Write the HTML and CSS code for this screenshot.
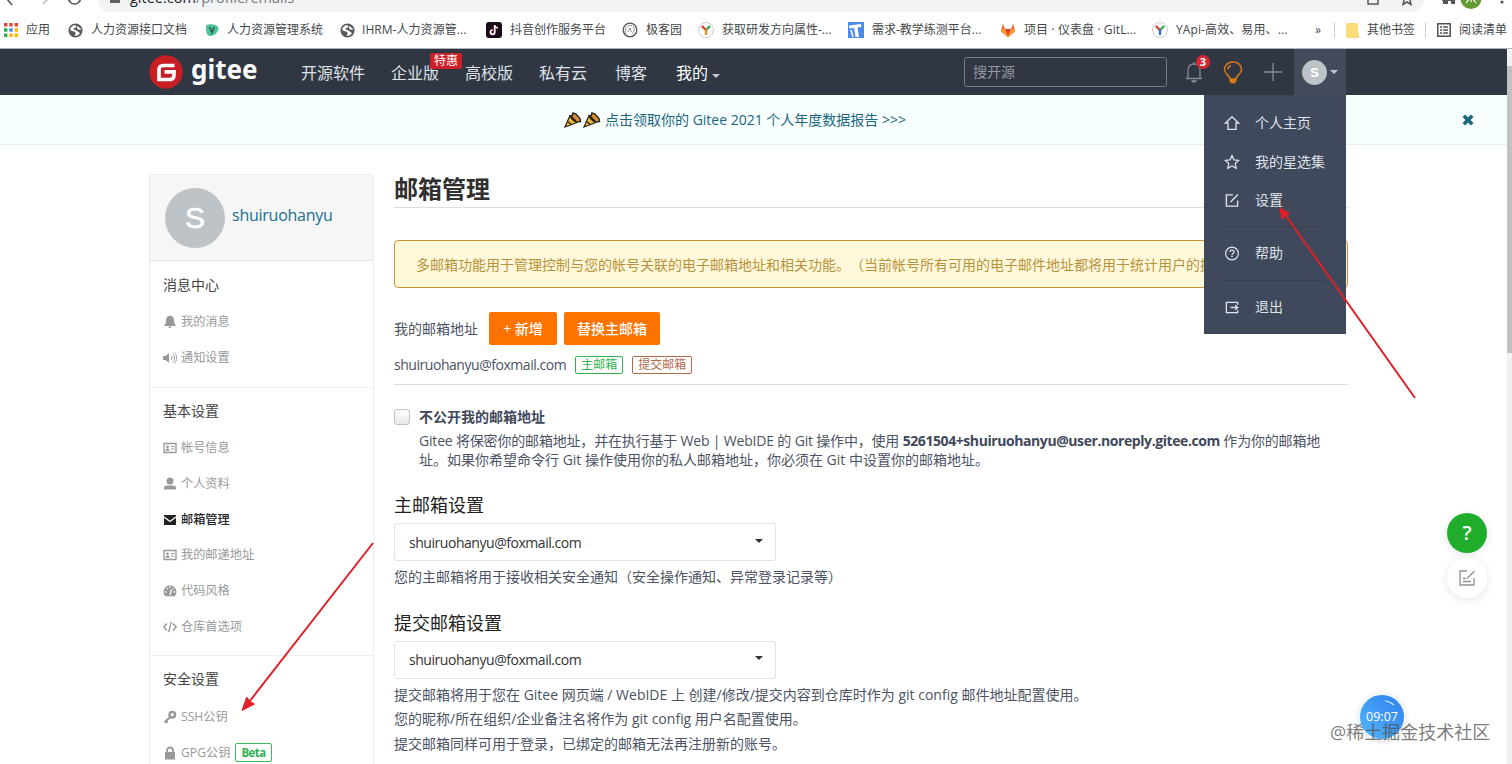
FILE: index.html
```html
<!DOCTYPE html>
<html lang="zh-CN">
<head>
    <meta charset="UTF-8" />
    <meta name="viewport" content="width=device-width, initial-scale=1.0" />
    <title>邮箱管理 - Gitee.com</title>
    <link rel="stylesheet" href="styles.css">
</head>
<body>
    <svg class="symbols" xmlns="http://www.w3.org/2000/svg">
        <symbol id="i-globe" viewBox="0 0 16 16"><circle cx="8" cy="8" r="7.500" fill="#55585c"/><path d="M8.500 2.500C5 2 2.500 4.500 2.300 7.500L5.500 9l2 .3.500 2-1 2.200c2.500.3 4.500-.8 5.800-2.700L10.500 9 8 7.500l-2-.8L8.500 5z" fill="#fff"/><path d="m9.500 3 3.500 2.500.8 2-3-.5L9 5z" fill="#fff"/><path d="m6 6.700 3.500-2M5 9.500l2.500 2" stroke="#55585c" stroke-width="1.200"/></symbol>
        <symbol id="i-card" viewBox="0 0 14 12"><path d="M1 1.500h12v9H1z" fill="none" stroke="#999" stroke-width="1.300"/><circle cx="4.500" cy="4.800" r="1.400" fill="#999"/><path d="M2.300 8.800c0-3 4.400-3 4.400 0zM8 4h3.500v1H8zM8 6.500h3.500v1H8z" fill="#999"/></symbol>
        <symbol id="i-edit" viewBox="0 0 16 16"><path d="M9 2H2v12h12V8M6.500 9.500 14.300 1.700" fill="none" stroke="currentColor" stroke-width="1.500"/></symbol>
        <symbol id="i-popper" viewBox="0 0 18 18"><path d="M1 16 6 4.500c3 .5 6 3.500 7 7z" fill="#f5b82e" stroke="#222" stroke-width="1.200"/><path d="M6 4c-1.500 2.500 5 9 7.500 7.500C15 10 8 3 6 4z" fill="#222"/><path d="m3.700 10.500 4 3.200" stroke="#222" stroke-width="1.200"/><path d="m8 5 1-3 3 1 4 4.500.5 3-3 .5" fill="#d98a32" stroke="#222" stroke-width="1.400"/></symbol>
    </svg>

    <div class="address-row">
        <svg class="nav-buttons" width="90" height="12" viewBox="0 0 90 12"><path d="M13-8 7-1l5 6" fill="none" stroke="#555" stroke-width="1.600"/><path d="m42-8 6 7-5 5" fill="none" stroke="#bbb" stroke-width="1.600"/><circle cx="74.500" cy="-2" r="6" fill="none" stroke="#555" stroke-width="1.700"/></svg>
        <div class="address-bar">
            <svg width="10" height="9" viewBox="0 0 10 9"><path d="M0-4h10v7H0z" fill="#5f6368"/></svg>
            <span class="address-text"><b>gitee.com</b>/profile/emails</span>
            <svg class="address-icons" width="50" height="12" viewBox="0 0 50 12"><path d="M2-5v9h10V0M41-8l1.500 5H48l-4 3 1 4.500-4-2.500-4 2.500L38 0l-4-3h5z" fill="none" stroke="#555" stroke-width="1.500"/></svg>
        </div>
        <svg width="88" height="12" viewBox="0 0 88 12"><path d="M18-5h12v5h1v4h-4V1h-3v3h-5V1h-1z" fill="#555"/><circle cx="47" cy="-1.500" r="10.500" fill="#649b32"/><path d="M47-4v6M42 3l3-4M52 3l-3-4" stroke="#fff" stroke-width="1.200"/><circle cx="78" cy="2" r="1.600" fill="#555"/></svg>
    </div>

    <div class="bookmarks">
        <svg width="14" height="14" viewBox="0 0 14 14"><path d="M0 0h3.400v3.400H0zM5.300 0h3.400v3.400H5.300zM10.600 0H14v3.400h-3.400z" fill="#e94335"/><path d="M0 5.300h3.400v3.400H0zM0 10.600h3.400V14H0z" fill="#34a853"/><path d="M5.300 5.300h3.400v3.400H5.300z" fill="#4285f4"/><path d="M10.600 5.300H14v3.400h-3.400zM5.300 10.600h3.400V14H5.300zM10.600 10.600H14V14h-3.400z" fill="#fbb605"/></svg>
        <span class="bm-text bm-apps">应用</span>
        <svg width="15" height="15"><use href="#i-globe"/></svg>
        <span class="bm-text bm-doc">人力资源接口文档</span>
        <svg width="14" height="14" viewBox="0 0 14 14"><path d="M1 4c0-3 3-3 7-2.500s5.500 2 5.500 4.500S9 13.500 5 13 1 8 1 4z" fill="#4fc39a"/><path d="M4.500 4 7 9.500 9 4" fill="none" stroke="#245b4b" stroke-width="1.500"/></svg>
        <span class="bm-text bm-hr">人力资源管理系统</span>
        <svg width="15" height="15"><use href="#i-globe"/></svg>
        <span class="bm-text bm-ihrm">IHRM-人力资源管...</span>
        <svg width="16" height="16" viewBox="0 0 16 16"><rect width="16" height="16" rx="3" fill="#170b1a"/><path d="M8.400 3v7.200a2 2 0 1 1-2-2" fill="none" stroke="#ef3a64" stroke-width="1.800"/><path d="M8.800 3v7.200a2.200 2.200 0 1 1-2.200-2.200M8.800 3c.3 1.800 1.500 2.800 3.200 3" fill="none" stroke="#fff" stroke-width="1.500"/></svg>
        <span class="bm-text bm-dy">抖音创作服务平台</span>
        <svg width="16" height="16" viewBox="0 0 16 16"><circle cx="8" cy="8" r="6.800" fill="#fff" stroke="#555" stroke-width="1.300"/><path d="M3.500 12C2 7 5 2.500 10 3.500M6 10l2-4 1.500 4M11 4c2 3 1.500 6-1 8" fill="none" stroke="#777" stroke-width=".8"/></svg>
        <span class="bm-text bm-geek">极客园</span>
        <svg width="16" height="16" viewBox="0 0 16 16"><circle cx="8" cy="8" r="7.500" fill="#fff" stroke="#ccc"/><path d="m3.800 4 4.200 4" stroke="#e4372e" stroke-width="2.400"/><path d="m12.200 4-4.200 4" stroke="#2fa84f" stroke-width="2.400"/><path d="M8 7.500V13" stroke="#e58a1f" stroke-width="2.400"/></svg>
        <span class="bm-text bm-yapi">获取研发方向属性-...</span>
        <svg width="16" height="16" viewBox="0 0 16 16"><path d="M0 0h16v16H0z" fill="#4a8bea"/><path d="M1 3.500 13 2l.5 3-4 .5L11 15H7.500L6 6l-4.500.5z" fill="#fff"/><path d="m3 8 2 7" stroke="#fff" stroke-width="1.500"/></svg>
        <span class="bm-text bm-need">需求-教学练测平台...</span>
        <svg width="16" height="16" viewBox="0 0 16 16"><path d="M8 15 .8 9.500 3 1.500 5 7h6l2-5.500 2.200 8z" fill="#f6692f"/><path d="M8 15 5 7h6z" fill="#dc4329"/><path d="m8 15 7.200-5.500L14.300 7H11zM8 15 .8 9.500 1.700 7H5z" fill="#fc9a39"/></svg>
        <span class="bm-text bm-gitlab">项目 · 仪表盘 · GitL...</span>
        <svg width="16" height="16" viewBox="0 0 16 16"><circle cx="8" cy="8" r="7.500" fill="#fff" stroke="#ccc"/><path d="m3.800 4 4.200 4" stroke="#e4372e" stroke-width="2.400"/><path d="m12.200 4-4.200 4" stroke="#2fa84f" stroke-width="2.400"/><path d="M8 7.500V13" stroke="#3467d8" stroke-width="2.400"/></svg>
        <span class="bm-text bm-yapi2">YApi-高效、易用、...</span>
        <span class="bm-text bm-more">»</span>
        <i class="bm-line"></i>
        <svg width="13" height="15" viewBox="0 0 13 15"><path d="M1.500 0H11l1 1v8.500h1V15H1.500L0 14V1z" fill="#f9dc7b"/></svg>
        <span class="bm-text bm-other">其他书签</span>
        <i class="bm-line"></i>
        <svg class="bm-list" width="14" height="14" viewBox="0 0 14 14"><path d="M.8.800h12.400v12.400H.8zM3 4h2M6.200 4H11M3 7h2M6.200 7H11M3 10h2M6.200 10H11" fill="none" stroke="#4d5156" stroke-width="1.500"/></svg>
        <span class="bm-text bm-read">阅读清单</span>
    </div>

    <div class="viewport">
        <div class="page">
            <header class="header">
                <div class="logo">
                    <svg width="34" height="34" viewBox="0 0 34 34"><circle cx="17" cy="17" r="16.700" fill="#c71d23"/><path d="M25.500 10.500H14a4 4 0 0 0-4 4v10h11a4 4 0 0 0 4-4v-3.700h-9.500" fill="none" stroke="#fff" stroke-width="3.700"/></svg>
                    <span class="logo-text">gitee</span>
                </div>
                <nav class="nav">
                    <a>开源软件</a>
                    <a class="nav-ent">企业版<em class="nav-badge">特惠</em></a>
                    <a>高校版</a>
                    <a>私有云</a>
                    <a class="nav-blog">博客</a>
                    <a class="nav-mine">我的<i class="caret"></i></a>
                </nav>
                <div class="search">搜开源</div>
                <div class="bell">
                    <svg width="18" height="22" viewBox="0 0 18 22"><path d="M1 17.500h16M3 17V9.500C3 5.500 5 3 9 3s6 2.500 6 6.500V17M9 3V1M7 20c1 1.500 3 1.500 4 0z" fill="none" stroke="#868c98" stroke-width="1.300"/></svg>
                    <span class="bell-count">3</span>
                </div>
                <svg class="bulb" width="20" height="23" viewBox="0 0 20 23"><path d="M7 18c0-4-5.500-4.500-5.500-9.500C1.500 4 5 1 10 1s8.500 3 8.500 7.500c0 5-5.500 5.500-5.500 9.500zM5 8.500c0-2 1-3.500 3-4" fill="none" stroke="#d87918" stroke-width="1.500"/><path d="M6.500 18h7v2.500l-2 2h-3l-2-2z" fill="#d87918"/></svg>
                <svg class="plus" width="18" height="18" viewBox="0 0 18 18"><path d="M9 0v18M0 9h18" stroke="#868c98" stroke-width="1.300"/></svg>
                <div class="user">
                    <span class="user-avatar">S</span>
                    <i class="caret"></i>
                    <ul class="user-menu">
                        <li><svg width="16" height="16" viewBox="0 0 16 16"><path d="M8 1.700 1.500 8H4v6.300h8V8h2.500z" fill="none" stroke="currentColor" stroke-width="1.300"/></svg>个人主页</li>
                        <li><svg width="16" height="16" viewBox="0 0 16 16"><path d="m8 1.500 2 4.400 4.700.5-3.500 3.200 1 4.700L8 12l-4.200 2.300 1-4.700L1.300 6.400 6 5.900z" fill="none" stroke="currentColor" stroke-width="1.300"/></svg>我的星选集</li>
                        <li><svg width="15" height="15"><use href="#i-edit"/></svg>设置</li>
                        <li class="menu-line"><svg width="15" height="15" viewBox="0 0 16 16"><circle cx="8" cy="8" r="6.800" fill="none" stroke="currentColor" stroke-width="1.300"/><path d="M5.800 6.500c0-3 4.400-2.600 4.400 0 0 1.500-2.200 1.500-2.200 3M8 10.500V12" fill="none" stroke="currentColor" stroke-width="1.400"/></svg>帮助</li>
                        <li class="menu-line"><svg width="15" height="15" viewBox="0 0 16 16"><path d="M14 5V2.500H2v11h12V11M6.500 8h7.500M11.500 5.500 14 8l-2.500 2.500" fill="none" stroke="currentColor" stroke-width="1.400"/></svg>退出</li>
                    </ul>
                </div>
            </header>

            <div class="banner">
                <svg width="18" height="18"><use href="#i-popper"/></svg>
                <svg width="18" height="18"><use href="#i-popper"/></svg>
                <a class="banner-link">点击领取你的 Gitee 2021 个人年度数据报告 &gt;&gt;&gt;</a>
                <svg class="banner-close" width="12" height="12" viewBox="0 0 12 12"><path d="m1.800 1.800 8.400 8.400m0-8.400-8.400 8.400" stroke="#1c6681" stroke-width="3.700"/></svg>
            </div>

            <div class="content">
                <aside class="sidebar">
                    <div class="profile">
                        <span class="profile-avatar">S</span>
                        <a class="profile-name">shuiruohanyu</a>
                    </div>
                    <section class="side-group">
                        <h4>消息中心</h4>
                        <ul>
                            <li><svg width="14" height="14" viewBox="0 0 14 14"><path d="M7 .5c-3 .5-4 2.500-4 5S2 9 1 11h12c-1-2-2-3-2-5.500s-1-4.500-4-5zM5.500 11.500h3C8.500 13.500 5.500 13.500 5.500 11.500z" fill="#999"/></svg>我的消息</li>
                            <li><svg width="14" height="14" viewBox="0 0 14 14"><path d="M0 5h2.500L6 2v10L2.500 9H0z" fill="#999"/><path d="M8 5c1.300 1 1.300 3 0 4M9.500 3c2.700 2 2.700 6 0 8M11 1.300c3.600 3 3.600 8.400 0 11.400" fill="none" stroke="#999"/></svg>通知设置</li>
                        </ul>
                    </section>
                    <section class="side-group">
                        <h4>基本设置</h4>
                        <ul>
                            <li><svg width="14" height="12"><use href="#i-card"/></svg>帐号信息</li>
                            <li><svg width="14" height="14" viewBox="0 0 14 14"><circle cx="7" cy="4" r="3.500" fill="#999"/><path d="M1 12.500V11c0-2.500 3-2.500 6-2.500s6 0 6 2.500v1.500z" fill="#999"/></svg>个人资料</li>
                            <li class="active"><svg width="14" height="12" viewBox="0 0 14 12"><path d="M1 1h12v10H1z" fill="#222"/><path d="m1 3 6 4.500L13 3" fill="none" stroke="#fff" stroke-width="1.300"/></svg>邮箱管理</li>
                            <li><svg width="14" height="12"><use href="#i-card"/></svg>我的邮递地址</li>
                            <li><svg width="14" height="14" viewBox="0 0 14 14"><path d="M2.300 12.300a6.500 6.500 0 1 1 9.400 0z" fill="#999"/><path d="M7 11 8.500 5.500M2 8h1.500M10.500 8H12M4 4l1 1M7 2v1.500M10.700 4 10 5" stroke="#fff" stroke-width="1.300"/></svg>代码风格</li>
                            <li><svg width="14" height="12" viewBox="0 0 14 12"><path d="M4 2.500.8 6 4 9.500M10 2.500 13.200 6 10 9.500M8.300.8 5.700 11.200" fill="none" stroke="#999" stroke-width="1.400"/></svg>仓库首选项</li>
                        </ul>
                    </section>
                    <section class="side-group">
                        <h4>安全设置</h4>
                        <ul>
                            <li><svg width="14" height="14" viewBox="0 0 14 14"><circle cx="9.300" cy="4.700" r="2.800" fill="none" stroke="#999" stroke-width="2.400"/><path d="m7 7-5.500 5.500M3 11l1.700 1.700" stroke="#999" stroke-width="2.200"/></svg>SSH公钥</li>
                            <li><svg width="14" height="14" viewBox="0 0 14 14"><path d="M2 6h10v7.500H2z" fill="#999"/><path d="M4 6.500V4.500c0-4 6-4 6 0v2" fill="none" stroke="#999" stroke-width="1.800"/></svg>GPG公钥<b class="beta">Beta</b></li>
                        </ul>
                    </section>
                </aside>

                <main class="main">
                    <h2 class="main-title">邮箱管理</h2>
                    <div class="alert">多邮箱功能用于管理控制与您的帐号关联的电子邮箱地址和相关功能。（当前帐号所有可用的电子邮件地址都将用于统计用户的提交贡献）</div>
                    <div class="mail-actions">
                        <span>我的邮箱地址</span>
                        <button class="btn btn-add">+ 新增</button>
                        <button class="btn btn-replace">替换主邮箱</button>
                    </div>
                    <div class="mail-row">
                        <span class="mail">shuiruohanyu@foxmail.com</span>
                        <span class="tag tag-green">主邮箱</span>
                        <span class="tag tag-brown">提交邮箱</span>
                    </div>
                    <div class="privacy">
                        <span class="checkbox"></span>
                        <div>
                            <div class="privacy-title">不公开我的邮箱地址</div>
                            <p class="privacy-text"><span class="line1">Gitee 将保密你的邮箱地址，并在执行基于 Web | WebIDE 的 Git 操作中，使用 <b>5261504+shuiruohanyu@user.noreply.gitee.com</b> 作为你的邮箱地</span><br>址。如果你希望命令行 Git 操作使用你的私人邮箱地址，你必须在 Git 中设置你的邮箱地址。</p>
                        </div>
                    </div>
                    <h3 class="sub-title">主邮箱设置</h3>
                    <div class="select"><span class="mail">shuiruohanyu@foxmail.com</span><i class="caret"></i></div>
                    <p class="hint">您的主邮箱将用于接收相关安全通知（安全操作通知、异常登录记录等）</p>
                    <h3 class="sub-title sub-title-commit">提交邮箱设置</h3>
                    <div class="select"><span class="mail">shuiruohanyu@foxmail.com</span><i class="caret"></i></div>
                    <p class="hint">提交邮箱将用于您在 Gitee 网页端 / WebIDE 上 创建/修改/提交内容到仓库时作为 git config 邮件地址配置使用。</p>
                    <p class="hint">您的昵称/所在组织/企业备注名将作为 git config 用户名配置使用。</p>
                    <p class="hint">提交邮箱同样可用于登录，已绑定的邮箱无法再注册新的账号。</p>
                </main>
            </div>
        </div>
        <div class="scrollbar"><div class="scroll-thumb"></div></div>
    </div>

    <div class="float-btn float-help">?</div>
    <div class="float-btn float-edit"><svg width="18" height="18" viewBox="0 0 18 18"><path d="M9 2H2v14h14V9M9 9.500 16.500 2M5 9.500h3M5 12.500h8" fill="none" stroke="#8c9097" stroke-width="1.300"/></svg></div>
    <div class="clock">09:07</div>
    <div class="watermark">@稀土掘金技术社区</div>

    <svg class="arrows" width="1512" height="764" viewBox="0 0 1512 764">
        <path d="M1385 701c3 0 5 1 9 4" fill="none" stroke="#d8ecff" stroke-width="1.200"/>
        <path d="M1415 398 1286 216M373 543 249 702" fill="none" stroke="#e02128" stroke-width="2"/>
        <path d="m1280 208 9.500 5.500-7.500 5.500zM242 710.500l4.700-13.500 3.300 4.500 4.500 2.500z" fill="#e02128" stroke="#e02128"/>
    </svg>
</body>
</html>
```
FILE: styles.css
```css
html,
body,
h2,
h3,
h4,
p,
ul,
li {
    padding: 0;
    margin: 0;
}
li {
    list-style: none;
}
i,
em {
    font-style: normal;
}
* {
    box-sizing: border-box;
}
html,
body {
    height: 100%;
}
body {
    position: relative;
    overflow: hidden;
    background: #fff;
    color: #4c5364;
    font: 14px/20px "Open Sans", "Noto Sans CJK SC", sans-serif;
    white-space: nowrap;
    text-spacing-trim: space-all;
}
svg {
    flex: none;
}
.symbols {
    position: absolute;
    width: 0;
    height: 0;
}
.caret {
    display: inline-block;
    border: 4px solid transparent;
    border-top-color: #c3c7cf;
    border-bottom: 0;
}

/* 浏览器地址栏 */
.address-row {
    display: flex;
    height: 12px;
    overflow: hidden;
}
.address-bar {
    display: flex;
    flex: 1;
    margin-left: 8px;
    padding-left: 12px;
    background: #f1f3f4;
    border-radius: 0 0 16px 16px;
}
.address-text {
    margin: -12px 0 0 10px;
    font-size: 14.5px;
    color: #777b80;
}
.address-text b {
    font-weight: 400;
    color: #222;
}
.address-icons {
    margin: 0 8px 0 auto;
}

.bookmarks {
    display: flex;
    align-items: center;
    height: 37px;
    padding-left: 4px;
    border-bottom: 1px solid #aeb4bf;
}
.bm-text {
    flex: none;
    margin-left: 8px;
    font-size: 12px;
    color: #44474a;
}
.bm-apps { width: 42px; }
.bm-doc { width: 114px; }
.bm-hr { width: 113px; }
.bm-ihrm { width: 124px; margin-left: 7px; padding-right: 1px; letter-spacing: 0.05px; }
.bm-dy { width: 112px; }
.bm-geek { width: 52px; }
.bm-yapi { width: 126px; }
.bm-need { width: 128px; }
.bm-gitlab { width: 128px; letter-spacing: 0.1px; }
.bm-yapi2 { width: 139px; letter-spacing: 0.1px; }
.bm-more { width: 19px; margin-left: 0; }
.bm-line {
    width: 1px;
    height: 16px;
    margin-right: 11px;
    background: #ccc;
}
.bm-other { width: 58px; }

.viewport {
    display: flex;
    height: 715px;
}
.page {
    flex: 1;
    overflow: hidden;
}
.scrollbar {
    width: 5px;
    padding-top: 17px;
    background: #f1f1f1;
}
.scroll-thumb {
    height: 287px;
    background: #c1c1c1;
}

/* 顶部导航 */
.header {
    display: flex;
    align-items: center;
    height: 46px;
    padding-left: 149px;
    background: #303642;
}
.logo {
    display: flex;
    width: 152px;
}
.logo-text {
    margin: -3px 0 0 8px;
    color: #fff;
    font: bold 26px/34px "Noto Sans", sans-serif;
}
.nav {
    display: flex;
    gap: 26px;
    width: 663px;
    padding-top: 1px;
    color: #dde1e7;
    font-size: 16px;
}
.nav-ent {
    position: relative;
}
.nav-badge {
    position: absolute;
    top: -10px;
    left: 39px;
    z-index: 1;
    width: 32px;
    height: 16px;
    border-radius: 2px;
    background: #cb2027;
    color: #fff;
    font-size: 12px;
    line-height: 15px;
    text-align: center;
}
.nav-blog {
    margin-left: 2px;
}
.nav-mine {
    margin-left: 3px;
    color: #fff;
}
.nav-mine .caret {
    margin: 0 0 1px 4px;
}
.search {
    width: 203px;
    height: 30px;
    padding-left: 8px;
    border: 1px solid #757b87;
    border-radius: 3px;
    color: #9297a1;
    line-height: 28px;
}
.bell {
    position: relative;
    height: 22px;
    margin-left: 18px;
}
.bell-count {
    position: absolute;
    top: -6px;
    left: 11px;
    width: 14px;
    height: 14px;
    border-radius: 50%;
    background: #d6272e;
    color: #fff;
    font-size: 11px;
    font-weight: bold;
    line-height: 14px;
    text-align: center;
}
.bulb {
    margin-left: 20px;
}
.plus {
    margin-left: 21px;
}
.user {
    position: relative;
    display: flex;
    align-items: center;
    height: 46px;
    width: 52px;
    margin-left: 12px;
    padding-left: 8px;
    background: #434a5c;
}
.user-avatar {
    width: 25px;
    height: 25px;
    margin-right: 3px;
    border-radius: 50%;
    background: #bdc3c7;
    color: #fff;
    font: bold 13px/25px "Liberation Sans", sans-serif;
    text-align: center;
}
.user-menu {
    position: absolute;
    top: 46px;
    right: 0;
    z-index: 2;
    width: 142px;
    height: 239px;
    padding: 9px 20px 0;
    background: #40485b;
    color: #dfe2ea;
}
.user-menu li {
    display: flex;
    align-items: center;
    height: 38.5px;
}
.user-menu li svg {
    width: 16px;
    margin-right: 15px;
}
.user-menu .menu-line {
    height: 54px;
    border-top: 1px solid #393f4f;
}
.user-menu li:nth-child(3) {
    margin-bottom: 6px;
}

.banner {
    display: flex;
    align-items: center;
    height: 50px;
    padding-left: 564px;
    border-bottom: 1px solid #e3efef;
    background: #f7ffff;
    color: #1c6681;
}
.banner svg + svg {
    margin-left: 1px;
}
.banner-link {
    margin-left: 4px;
}
.banner .banner-close {
    margin: 0 33px 0 auto;
}

.content {
    display: flex;
    padding: 29px 159px 0 149px;
}

/* 左侧菜单 */
.sidebar {
    flex: none;
    width: 225px;
    border: 1px solid #ebecee;
    border-radius: 3px;
    color: #999;
}
.profile {
    display: flex;
    align-items: center;
    height: 86px;
    padding-left: 15px;
    border-bottom: 1px solid #e6e7e9;
    background: #f6f6f7;
}
.profile-avatar {
    width: 60px;
    height: 60px;
    margin-right: 7px;
    border-radius: 50%;
    background: #bdc3c7;
    color: #fff;
    font: 30px/60px "Liberation Sans", sans-serif;
    -webkit-text-stroke: 0.6px #fff;
    text-align: center;
}
.profile-name {
    margin-top: -5px;
    color: #1c6d8b;
    font-size: 16px;
    letter-spacing: -0.25px;
}
.side-group {
    padding: 14px 13px 11px;
}
.side-group + .side-group {
    padding-top: 13px;
    border-top: 1px solid #efefef;
}
.side-group h4 {
    height: 29px;
    color: #444;
    font-weight: 400;
}
.side-group li {
    display: flex;
    align-items: center;
    height: 35.8px;
    padding-top: 1px;
    font-size: 12.2px;
}
.side-group li svg {
    margin-right: 4px;
}
.side-group .active {
    color: #222;
    font-weight: 500;
}
.beta {
    margin-left: 5px;
    padding: 0 5px;
    border: 1px solid #41b95f;
    border-radius: 2px;
    color: #2fb14f;
    font-size: 11.5px;
    letter-spacing: -0.6px;
    line-height: 17px;
}

/* 右侧内容 */
.main {
    width: 954px;
    margin-left: 20px;
}
.main-title {
    height: 34px;
    border-bottom: 1px solid #dededf;
    color: #303030;
    font-size: 24px;
    line-height: 29px;
}
.alert {
    height: 48px;
    margin-top: 32px;
    padding-left: 21px;
    overflow: hidden;
    border: 1px solid #c6953a;
    border-radius: 4px;
    background: #fff8db;
    color: #b8923a;
    line-height: 48px;
}
.mail-actions {
    display: flex;
    align-items: center;
    margin-top: 24px;
}
.btn {
    height: 33px;
    padding: 0;
    border: 0;
    border-radius: 2px;
    background: #fe7300;
    color: #fff;
    font: 500 14px/32px "Open Sans", "Noto Sans CJK SC", sans-serif;
}
.btn-add {
    width: 68px;
    margin: 0 7px 0 11px;
}
.btn-replace {
    width: 96px;
}
.mail-row {
    display: flex;
    align-items: center;
    height: 40px;
    border-bottom: 1px solid #dededf;
}
.mail {
    letter-spacing: -0.46px;
}
.tag {
    height: 18px;
    margin-left: 9px;
    padding: 0 5px;
    border: 1px solid;
    border-radius: 2px;
    font-size: 12px;
    line-height: 16px;
}
.tag-green {
    color: #30b450;
}
.tag-brown {
    color: #b4694d;
}
.privacy {
    display: flex;
    margin-top: 22px;
}
.checkbox {
    flex: none;
    width: 16px;
    height: 16px;
    margin: 2px 9px 0 0;
    border: 1px solid #bfc1c4;
    border-radius: 3px;
    background: linear-gradient(#fff, #e6e8ea);
}
.privacy-title {
    height: 24px;
    font-weight: bold;
    color: #40485b;
}
.privacy-text {
    line-height: 19px;
}
.line1 {
    letter-spacing: -0.18px;
}
.line1 b {
    color: #40485b;
    letter-spacing: -0.42px;
}
.sub-title {
    margin-top: 27px;
    color: #222;
    font-size: 18px;
    font-weight: 400;
    line-height: 18px;
}
.sub-title-commit {
    margin-top: 24px;
}
.select {
    display: flex;
    align-items: center;
    justify-content: space-between;
    width: 382px;
    height: 38px;
    margin: 9px 0 4px;
    padding: 1px 12px 0 14px;
    border: 1px solid #e2e3e5;
    border-radius: 3px;
    color: #333;
}
.select .caret {
    margin-top: -4px;
    border-top-color: #333;
}
.hint {
    line-height: 24.5px;
}

/* 悬浮按钮 */
.float-btn {
    position: absolute;
    left: 1447px;
    display: flex;
    align-items: center;
    justify-content: center;
    width: 40px;
    height: 40px;
    border-radius: 50%;
    box-shadow: 0 2px 10px rgba(0, 0, 0, 0.1);
}
.float-help {
    top: 513px;
    background: #21ad2c;
    color: #fff;
    font-size: 20px;
    font-weight: 600;
}
.float-edit {
    top: 558px;
    background: #fff;
}
.clock {
    position: absolute;
    top: 693px;
    left: 1358px;
    width: 48px;
    height: 48px;
    border: 2px solid #eef6ff;
    border-radius: 50%;
    background: linear-gradient(45deg, #55b8fb, #2f7fee);
    box-shadow: 0 1px 4px rgba(0, 0, 0, 0.15);
    color: #fff;
    font-size: 12.5px;
    line-height: 44px;
    text-align: center;
}
.watermark {
    position: absolute;
    top: 720px;
    left: 1330px;
    color: rgba(80, 80, 80, 0.75);
    font-size: 18px;
    line-height: 24px;
}
.arrows {
    position: absolute;
    top: 0;
    left: 0;
    z-index: 5;
    pointer-events: none;
}
```
